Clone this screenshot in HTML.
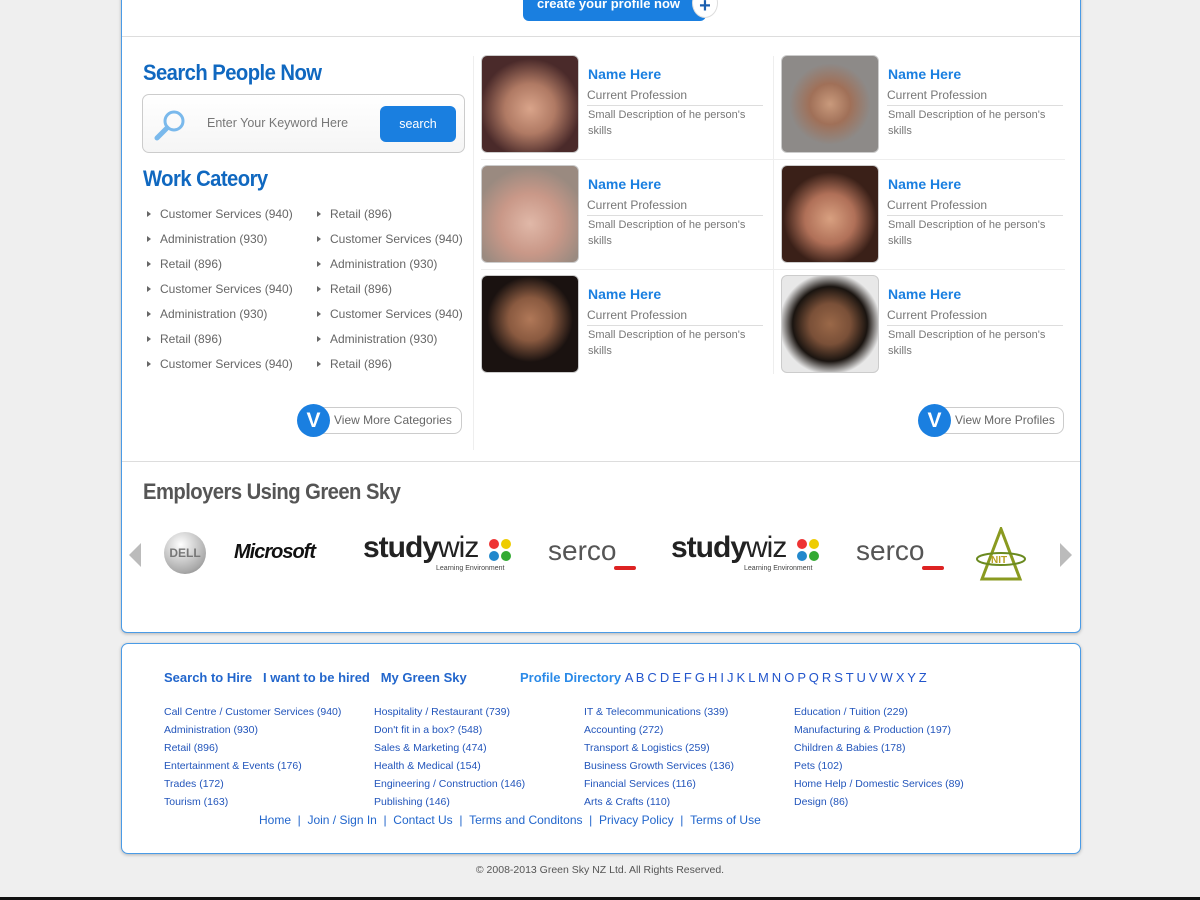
<!DOCTYPE html>
<html><head><meta charset="utf-8"><style>
*{margin:0;padding:0;box-sizing:border-box}
body{width:1200px;height:900px;background:#efefef;font-family:"Liberation Sans",Arial,sans-serif;position:relative;overflow:hidden}
.a{position:absolute}
.card{position:absolute;left:121px;width:960px;background:#fff;border:1px solid #4a9be6;box-shadow:0 1px 3px rgba(0,0,0,.25)}
h2{position:absolute;font-family:"Liberation Sans",sans-serif;font-weight:bold;color:#1068c0;font-size:22px;letter-spacing:-0.6px;transform:scaleX(.92);transform-origin:left}
.cat{position:absolute;font-size:12px;color:#666}
.cat span{position:absolute;left:-13px;top:4px;border-left:4px solid #666;border-top:3.5px solid transparent;border-bottom:3.5px solid transparent}
.ph{position:absolute;width:98px;height:98px;border-radius:6px;border:1px solid #ccc}
.nm{position:absolute;font-size:14px;font-weight:bold;color:#1a7fe0}
.pf{position:absolute;font-size:12px;color:#777;width:176px;border-bottom:1px solid #ddd;padding-bottom:3px}
.ds{position:absolute;font-size:11px;color:#777;line-height:16px;width:176px}
.vm{position:absolute;height:27px;border:1px solid #ccc;border-radius:8px;font-size:12px;color:#666;line-height:25px;padding-left:34px;background:#fff}
.vm b{position:absolute;left:-3px;top:-4px;width:33px;height:33px;border-radius:50%;background:#1a7fe0;color:#fff;font-size:21px;text-align:center;line-height:33px}
.fl{position:absolute;font-size:10.5px;color:#2255bb;line-height:18px}
</style></head><body>
<div class="card" style="top:-10px;height:643px;border-radius:0 0 6px 6px"></div>
<div class="a" style="left:523px;top:-6px;width:183px;height:27px;background:#1a7fe0;border-radius:0 0 6px 6px;color:#fff;font-weight:bold;font-size:13px;padding-left:14px;line-height:20px">create your profile now</div>
<div class="a" style="left:692px;top:-12px;width:26px;height:30px;border-radius:50%;background:#fff;border:1px solid #ddd;color:#1a5fb0;font-size:20px;font-weight:bold;text-align:center;line-height:34px">+</div>
<div class="a" style="left:122px;top:36px;width:958px;height:1px;background:#ddd"></div>
<div class="a" style="left:122px;top:461px;width:958px;height:1px;background:#ddd"></div>
<div class="a" style="left:473px;top:56px;width:1px;height:394px;background:#eee"></div>
<div class="a" style="left:773px;top:56px;width:1px;height:318px;background:#eee"></div>

<h2 style="left:143px;top:60px">Search People Now</h2>
<div class="a" style="left:142px;top:94px;width:323px;height:59px;border:1px solid #ccc;border-radius:7px;background:linear-gradient(#fff,#f5f5f5)"></div>
<svg class="a" style="left:153px;top:108px" width="36" height="34"><circle cx="21" cy="13" r="9" fill="none" stroke="#7ab9ec" stroke-width="3"/><line x1="14" y1="20" x2="4" y2="30" stroke="#7ab9ec" stroke-width="5" stroke-linecap="round"/></svg>
<div class="a" style="left:207px;top:116px;font-size:12.5px;color:#777">Enter Your Keyword Here</div>
<div class="a" style="left:380px;top:106px;width:76px;height:36px;background:#1a7fe0;border-radius:6px;color:#fff;font-size:12.5px;text-align:center;line-height:36px">search</div>

<h2 style="left:143px;top:166px">Work Cateory</h2>
<div class="cat" style="left:160px;top:207px"><span></span>Customer Services (940)</div>
<div class="cat" style="left:160px;top:232px"><span></span>Administration (930)</div>
<div class="cat" style="left:160px;top:257px"><span></span>Retail (896)</div>
<div class="cat" style="left:160px;top:282px"><span></span>Customer Services (940)</div>
<div class="cat" style="left:160px;top:307px"><span></span>Administration (930)</div>
<div class="cat" style="left:160px;top:332px"><span></span>Retail (896)</div>
<div class="cat" style="left:160px;top:357px"><span></span>Customer Services (940)</div>
<div class="cat" style="left:330px;top:207px"><span></span>Retail (896)</div>
<div class="cat" style="left:330px;top:232px"><span></span>Customer Services (940)</div>
<div class="cat" style="left:330px;top:257px"><span></span>Administration (930)</div>
<div class="cat" style="left:330px;top:282px"><span></span>Retail (896)</div>
<div class="cat" style="left:330px;top:307px"><span></span>Customer Services (940)</div>
<div class="cat" style="left:330px;top:332px"><span></span>Administration (930)</div>
<div class="cat" style="left:330px;top:357px"><span></span>Retail (896)</div>
<div class="vm" style="left:299px;top:407px;width:163px"><b>V</b>View More Categories</div>
<div class="vm" style="left:920px;top:407px;width:144px"><b>V</b>View More Profiles</div>

<div class="a" style="left:481px;top:159px;width:584px;height:1px;background:#eee"></div>
<div class="a" style="left:481px;top:269px;width:584px;height:1px;background:#eee"></div>

<div class="ph" style="left:481px;top:55px;background:radial-gradient(circle at 50% 55%,#d9a48a 0,#b07a64 35%,#4a2a2a 70%)"></div>
<div class="ph" style="left:781px;top:55px;background:radial-gradient(circle at 50% 50%,#c99a7c 0,#a07058 30%,#8d8a88 60%)"></div>
<div class="ph" style="left:481px;top:165px;background:radial-gradient(circle at 50% 60%,#e0b8a8 0,#c99888 40%,#9a8a80 75%)"></div>
<div class="ph" style="left:781px;top:165px;background:radial-gradient(circle at 50% 55%,#d8a080 0,#b07058 35%,#3a2018 65%)"></div>
<div class="ph" style="left:481px;top:275px;background:radial-gradient(circle at 50% 45%,#b07858 0,#8a5a40 30%,#1a1210 60%)"></div>
<div class="ph" style="left:781px;top:275px;background:radial-gradient(circle at 50% 50%,#9a6848 0,#7a5038 30%,#1a1410 55%,#e8e8e8 75%)"></div>

<div class="nm" style="left:588px;top:66px">Name Here</div><div class="pf" style="left:587px;top:88px">Current Profession</div><div class="ds" style="left:588px;top:107px">Small Description of he person's skills</div>
<div class="nm" style="left:888px;top:66px">Name Here</div><div class="pf" style="left:887px;top:88px">Current Profession</div><div class="ds" style="left:888px;top:107px">Small Description of he person's skills</div>
<div class="nm" style="left:588px;top:176px">Name Here</div><div class="pf" style="left:587px;top:198px">Current Profession</div><div class="ds" style="left:588px;top:217px">Small Description of he person's skills</div>
<div class="nm" style="left:888px;top:176px">Name Here</div><div class="pf" style="left:887px;top:198px">Current Profession</div><div class="ds" style="left:888px;top:217px">Small Description of he person's skills</div>
<div class="nm" style="left:588px;top:286px">Name Here</div><div class="pf" style="left:587px;top:308px">Current Profession</div><div class="ds" style="left:588px;top:327px">Small Description of he person's skills</div>
<div class="nm" style="left:888px;top:286px">Name Here</div><div class="pf" style="left:887px;top:308px">Current Profession</div><div class="ds" style="left:888px;top:327px">Small Description of he person's skills</div>

<h2 style="left:143px;top:479px;color:#555">Employers Using Green Sky</h2>
<div class="a" style="left:129px;top:543px;border-right:12px solid #bbb;border-top:12px solid transparent;border-bottom:12px solid transparent"></div>
<div class="a" style="left:1060px;top:543px;border-left:12px solid #bbb;border-top:12px solid transparent;border-bottom:12px solid transparent"></div>
<div class="a" style="left:164px;top:532px;width:42px;height:42px;border-radius:50%;background:radial-gradient(circle at 40% 30%,#fff,#aaa 70%,#777);font-size:12px;font-weight:bold;color:#777;text-align:center;line-height:42px">DELL</div>
<div class="a" style="left:234px;top:541px;font-size:20px;font-weight:bold;font-style:italic;color:#111;letter-spacing:-1px">Microsoft</div>
<div class="a" style="left:363px;top:531px;font-size:30px;font-weight:bold;color:#222;letter-spacing:-1px">study<span style="font-weight:normal">wiz</span></div>
<div class="a" style="left:436px;top:565px;font-size:7px;color:#444">Learning Environment</div>
<svg class="a" style="left:488px;top:538px" width="24" height="24"><circle cx="6" cy="6" r="5" fill="#e33"/><circle cx="18" cy="6" r="5" fill="#ec0"/><circle cx="6" cy="18" r="5" fill="#28c"/><circle cx="18" cy="18" r="5" fill="#3a3"/></svg>
<div class="a" style="left:548px;top:535px;font-size:28px;color:#555">serco</div>
<div class="a" style="left:614px;top:566px;width:22px;height:4px;background:#d22;border-radius:2px"></div>
<div class="a" style="left:671px;top:531px;font-size:30px;font-weight:bold;color:#222;letter-spacing:-1px">study<span style="font-weight:normal">wiz</span></div>
<div class="a" style="left:744px;top:565px;font-size:7px;color:#444">Learning Environment</div>
<svg class="a" style="left:796px;top:538px" width="24" height="24"><circle cx="6" cy="6" r="5" fill="#e33"/><circle cx="18" cy="6" r="5" fill="#ec0"/><circle cx="6" cy="18" r="5" fill="#28c"/><circle cx="18" cy="18" r="5" fill="#3a3"/></svg>
<div class="a" style="left:856px;top:535px;font-size:28px;color:#555">serco</div>
<div class="a" style="left:922px;top:566px;width:22px;height:4px;background:#d22;border-radius:2px"></div>
<svg class="a" style="left:974px;top:527px" width="54" height="54"><polygon points="27,2 8,52 46,52" fill="none" stroke="#8a9a20" stroke-width="3"/><ellipse cx="27" cy="32" rx="24" ry="6" fill="none" stroke="#6a8a20" stroke-width="2"/><text x="17" y="36" font-size="10" fill="#b8a020" font-weight="bold">NIT</text></svg>

<div class="card" style="top:643px;height:211px;border-radius:7px"></div>
<div class="a" style="left:164px;top:670px;font-size:13px;font-weight:bold;color:#2266cc">Search to Hire &nbsp; I want to be hired &nbsp; My Green Sky</div>
<div class="a" style="left:520px;top:670px;font-size:13px;font-weight:bold;color:#2a8ae8">Profile Directory <span style="color:#2255cc;font-weight:normal;letter-spacing:-0.3px">A B C D E F G H I J K L M N O P Q R S T U V W X Y Z</span></div>
<div class="fl" style="left:164px;top:703px">Call Centre / Customer Services (940)<br>Administration (930)<br>Retail (896)<br>Entertainment &amp; Events (176)<br>Trades (172)<br>Tourism (163)</div>
<div class="fl" style="left:374px;top:703px">Hospitality / Restaurant (739)<br>Don't fit in a box? (548)<br>Sales &amp; Marketing (474)<br>Health &amp; Medical (154)<br>Engineering / Construction (146)<br>Publishing (146)</div>
<div class="fl" style="left:584px;top:703px">IT &amp; Telecommunications (339)<br>Accounting (272)<br>Transport &amp; Logistics (259)<br>Business Growth Services (136)<br>Financial Services (116)<br>Arts &amp; Crafts (110)</div>
<div class="fl" style="left:794px;top:703px">Education / Tuition (229)<br>Manufacturing &amp; Production (197)<br>Children &amp; Babies (178)<br>Pets (102)<br>Home Help / Domestic Services (89)<br>Design (86)</div>
<div class="a" style="left:259px;top:813px;font-size:12px;color:#2266cc">Home &nbsp;| &nbsp;Join / Sign In &nbsp;| &nbsp;Contact Us &nbsp;| &nbsp;Terms and Conditons &nbsp;| &nbsp;Privacy Policy &nbsp;| &nbsp;Terms of Use</div>
<div class="a" style="left:0;width:1200px;top:864px;text-align:center;font-size:10.5px;color:#555">© 2008-2013 Green Sky NZ Ltd. All Rights Reserved.</div>
<div class="a" style="left:0;top:897px;width:1200px;height:3px;background:#111"></div>
</body></html>
